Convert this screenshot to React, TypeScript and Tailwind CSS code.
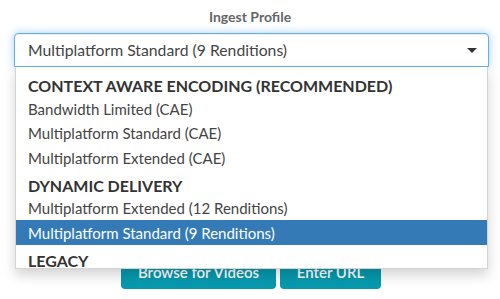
import React from 'react';

type Row = { label: string; kind: 'group' | 'option'; selected?: boolean; pad?: string };

const rows: Row[] = [
  { label: 'CONTEXT AWARE ENCODING (RECOMMENDED)', kind: 'group', pad: 'pt-[9px]' },
  { label: 'Bandwidth Limited (CAE)', kind: 'option' },
  { label: 'Multiplatform Standard (CAE)', kind: 'option' },
  { label: 'Multiplatform Extended (CAE)', kind: 'option' },
  { label: 'DYNAMIC DELIVERY', kind: 'group', pad: 'pt-[6px]' },
  { label: 'Multiplatform Extended (12 Renditions)', kind: 'option' },
  { label: 'Multiplatform Standard (9 Renditions)', kind: 'option', selected: true },
  { label: 'LEGACY', kind: 'group', pad: 'pt-[6px]' },
];

export default function App() {
  return (
    <div className="w-[500px] h-[299px] bg-white overflow-hidden font-['Lato',sans-serif]">
      {/* label */}
      <div className="pt-[7px] text-center text-[14px] leading-[20px] font-bold text-[#666]">
        Ingest Profile
      </div>

      {/* select (open) */}
      <div className="relative mt-[6px] ml-[14px] w-[475px] z-10">
        <div className="h-[34px] flex items-center justify-between pl-[13px] pr-[11px] border border-[#66afe9] rounded-t-[4px] bg-white shadow-[inset_0_1px_1px_rgba(0,0,0,0.075),0_0_8px_rgba(102,175,233,0.6)]">
          <span className="text-[15.75px] text-[#444]">Multiplatform Standard (9 Renditions)</span>
          <svg width="10" height="5" viewBox="0 0 10 5" className="mt-[1px]">
            <path d="M0 0 L10 0 L5 5 Z" fill="#333" />
          </svg>
        </div>

        <div className="absolute top-full left-[1px] right-[1px] h-[202px] overflow-hidden bg-white border-l border-r border-b border-[#d4d4d4] shadow-[0_6px_12px_rgba(0,0,0,0.175)]">
          {rows.map((r, i) =>
            r.kind === 'group' ? (
              <div key={i} className={`${r.pad} px-[12px]`}>
                <div className="leading-[20px] text-[16px] font-bold text-[#333]">{r.label}</div>
              </div>
            ) : (
              <div
                key={i}
                className={`h-[24.5px] pt-[1.5px] leading-[23px] px-[12px] text-[15px] ${
                  r.selected ? 'bg-[#337ab7] text-white' : 'text-[#444]'
                }`}
              >
                {r.label}
              </div>
            )
          )}
        </div>
      </div>

      {/* buttons under the menu */}
      <div className="mt-[188px] flex justify-center gap-[4px] pl-[2px]">
        <button className="w-[155px] h-[34px] rounded-[4px] bg-[#0799ae] text-white text-[15px] font-semibold">
          Browse for Videos
        </button>
        <button className="w-[101px] h-[34px] rounded-[4px] bg-[#0799ae] text-white text-[15px] font-semibold">
          Enter URL
        </button>
      </div>
    </div>
  );
}
